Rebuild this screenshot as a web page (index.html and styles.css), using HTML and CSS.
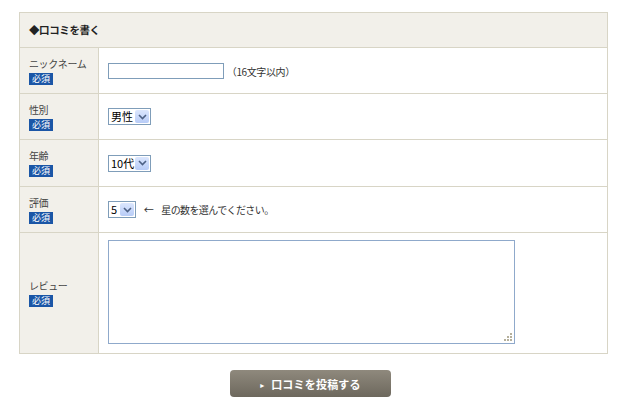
FILE: index.html
```html
<!DOCTYPE html>
<html lang="ja">
<head>
        <meta charset="UTF-8">
        <meta name="viewport" content="width=device-width, initial-scale=1.0">
        <title>口コミを書く</title>
        <link rel="stylesheet" href="styles.css">
</head>
<body>
        <div class="wrap">
                <table class="review">
                        <tr>
                                <th class="head" colspan="2">◆口コミを書く</th>
                        </tr>
                        <tr class="row1">
                                <th>ニックネーム<br><span class="must">必須</span></th>
                                <td><input class="nick" type="text"> <span class="note">（16文字以内）</span></td>
                        </tr>
                        <tr class="row2">
                                <th>性別<br><span class="must">必須</span></th>
                                <td>
                                        <span class="sel">
                                                <select class="w42"><option>男性</option><option>女性</option></select>
                                                <span class="arrow"><svg width="9" height="6" viewBox="0 0 9 6"><path d="M1 1 L4.5 4.5 L8 1" fill="none" stroke="#4d6185" stroke-width="1.6"/></svg></span>
                                        </span>
                                </td>
                        </tr>
                        <tr class="row3">
                                <th>年齢<br><span class="must">必須</span></th>
                                <td>
                                        <span class="sel">
                                                <select class="w42"><option>10代</option><option>20代</option></select>
                                                <span class="arrow"><svg width="9" height="6" viewBox="0 0 9 6"><path d="M1 1 L4.5 4.5 L8 1" fill="none" stroke="#4d6185" stroke-width="1.6"/></svg></span>
                                        </span>
                                </td>
                        </tr>
                        <tr class="row4">
                                <th>評価<br><span class="must">必須</span></th>
                                <td>
                                        <span class="sel">
                                                <select class="w27"><option>5</option><option>4</option></select>
                                                <span class="arrow"><svg width="9" height="6" viewBox="0 0 9 6"><path d="M1 1 L4.5 4.5 L8 1" fill="none" stroke="#4d6185" stroke-width="1.6"/></svg></span>
                                        </span>
                                        <span class="note hint"><span class="larr">←</span>星の数を選んでください。</span>
                                </td>
                        </tr>
                        <tr class="row5">
                                <th>レビュー<br><span class="must">必須</span></th>
                                <td>
                                        <span class="area">
                                                <textarea class="text"></textarea>
                                                <svg class="grip" width="8" height="8" viewBox="0 0 8 8" fill="#b5b09c">
                                                        <rect x="6" y="0" width="2" height="2"/>
                                                        <rect x="3" y="3" width="2" height="2"/>
                                                        <rect x="6" y="3" width="2" height="2"/>
                                                        <rect x="0" y="6" width="2" height="2"/>
                                                        <rect x="3" y="6" width="2" height="2"/>
                                                        <rect x="6" y="6" width="2" height="2"/>
                                                </svg>
                                        </span>
                                </td>
                        </tr>
                </table>
                <div class="submit">
                        <button class="btn" type="button"><span class="tri">▸</span> 口コミを投稿する</button>
                </div>
        </div>
</body>
</html>
```

FILE: styles.css
```css
* {
        margin: 0;
        padding: 0;
        box-sizing: border-box;
}

body {
        background-color: #fff;
        font-family: "Noto Sans CJK JP", "DejaVu Sans", sans-serif;
        font-size: 10px;
        letter-spacing: -0.4px;
        color: #333;
}

.wrap {
        padding: 12px 0 0 19px;
        width: 608px;
}

.review {
        width: 589px;
        border-collapse: collapse;
        border: 1px solid #d8d5c6;
}

.review th,
.review td {
        border: 1px solid #d8d5c6;
        text-align: left;
        vertical-align: middle;
}

.review th {
        width: 79px;
        background-color: #f2f0ea;
        font-weight: normal;
        padding: 0 0 0 9px;
        line-height: 14px;
        color: #444;
}

.review th.head {
        height: 35px;
        font-weight: bold;
        font-size: 10.5px;
        padding-left: 9px;
        color: #222;
}

.review td {
        padding: 0 0 0 9px;
        background-color: #fff;
}

.row1 th, .row1 td { height: 46px; }
.row2 th, .row2 td { height: 46px; }
.row3 th, .row3 td { height: 47px; }
.row4 th, .row4 td { height: 46px; }
.row5 th, .row5 td { height: 121px; }

.must {
        display: inline-block;
        background-color: #1b56a6;
        color: #fff;
        font-size: 9px;
        letter-spacing: 0;
        line-height: 12px;
        padding: 0 3px;
        margin-top: 1px;
}

.nick {
        width: 116px;
        height: 16px;
        border: 1px solid #7f9db9;
        vertical-align: middle;
}

.note {
        vertical-align: middle;
        color: #333;
        margin-left: 1px;
}

.hint {
        margin-left: 6px;
        letter-spacing: -0.6px;
}

.larr {
        margin-right: 8px;
}

.sel {
        position: relative;
        display: inline-block;
        vertical-align: middle;
}

.sel select {
        appearance: none;
        -webkit-appearance: none;
        height: 17px;
        border: 1px solid #7f9db9;
        background-color: #fff;
        font-family: "Noto Sans CJK JP", "DejaVu Sans", sans-serif;
        font-size: 11px;
        color: #000;
        padding: 0 0 0 2px;
        line-height: 15px;
        display: block;
}

.w42 { width: 43px; }
.w27 { width: 28px; }

.arrow {
        position: absolute;
        top: 2px;
        right: 2px;
        width: 14px;
        height: 13px;
        background: linear-gradient(#dbe6fd, #b8ccf7);
        border-radius: 2px;
        display: flex;
        align-items: center;
        justify-content: center;
}

.area {
        position: relative;
        display: block;
        width: 407px;
        margin-top: -2px;
}

.text {
        display: block;
        width: 407px;
        height: 104px;
        border: 1px solid #8fa9cb;
        resize: none;
}

.grip {
        position: absolute;
        right: 3px;
        bottom: 3px;
}

.submit {
        display: flex;
        justify-content: center;
        padding: 16px 0 0 0;
        width: 583px;
}

.btn {
        width: 161px;
        height: 27px;
        border: none;
        border-radius: 4px;
        background: linear-gradient(#8f897d, #6d685d);
        color: #fff;
        font-family: "Noto Sans CJK JP", "DejaVu Sans", sans-serif;
        font-size: 11px;
        font-weight: bold;
        letter-spacing: 0.2px;
}

.tri {
        font-size: 8px;
        vertical-align: 1px;
        margin-right: 4px;
        font-weight: normal;
}
```
